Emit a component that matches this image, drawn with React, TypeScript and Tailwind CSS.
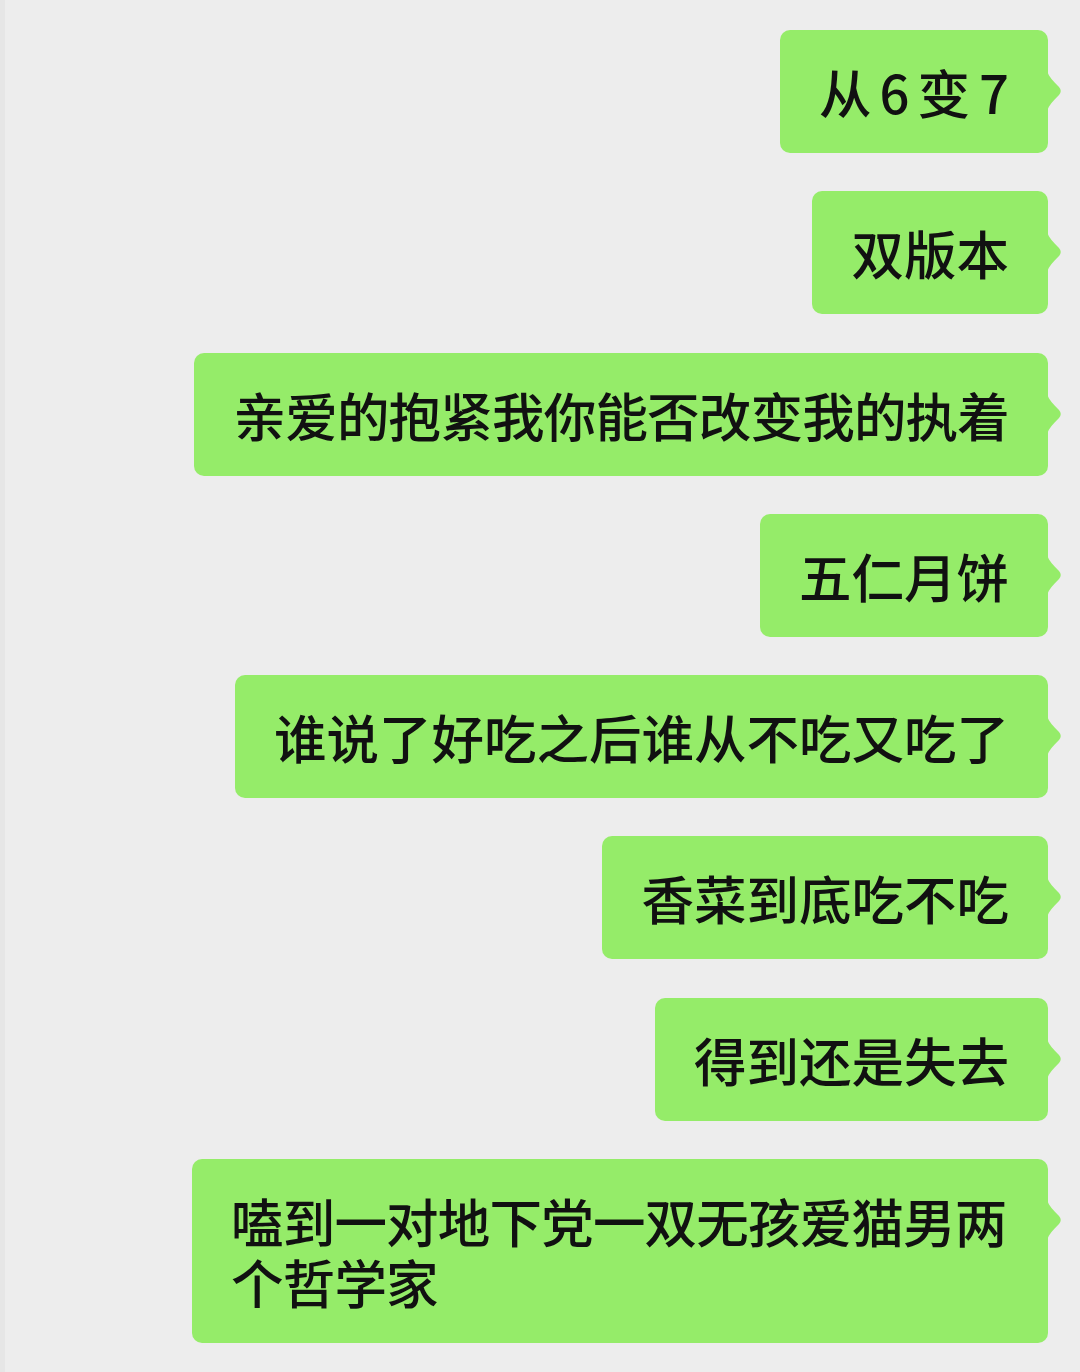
import type { FC, ReactNode } from 'react';

type Msg = { text: ReactNode; tight?: boolean };

const messages: Msg[] = [
  {
    text: (
      <>
        从<span className="mx-[8px]">6</span>变<span className="ml-[9px]">7</span>
      </>
    ),
  },
  { text: '双版本' },
  { text: '亲爱的抱紧我你能否改变我的执着', tight: true },
  { text: '五仁月饼' },
  { text: '谁说了好吃之后谁从不吃又吃了' },
  { text: '香菜到底吃不吃' },
  { text: '得到还是失去' },
  { text: '嗑到一对地下党一双无孩爱猫男两个哲学家', tight: true },
];

const Tail: FC = () => (
  <svg
    width="16"
    height="40"
    viewBox="0 0 16 40"
    className="absolute left-full top-[41px] -ml-px"
  >
    <path
      d="M0 0 C2 6 6 10 12 16 Q15.5 20 12 24 C6 30 2 34 0 40 Z"
      fill="#95ec69"
    />
  </svg>
);

const Bubble: FC<Msg> = ({ text, tight }) => (
  <div
    className={
      'relative max-w-[856px] rounded-[10px] bg-[#95ec69] px-[39px] py-[31px] text-[52.5px] font-medium leading-[61px] text-[#111] ' +
      (tight ? 'tracking-[-0.8px]' : '')
    }
  >
    {text}
    <Tail />
  </div>
);

export default function App() {
  return (
    <div
      className="min-h-[1372px] w-[1080px] border-l-[5px] border-[#e6e6e6] bg-[#ededed]"
      style={{ fontFamily: '"Noto Sans CJK SC", "Noto Sans", sans-serif' }}
    >
      <div className="flex flex-col items-end gap-[38.3px] pr-[32px] pt-[30px]">
        {messages.map((m, i) => (
          <Bubble key={i} {...m} />
        ))}
      </div>
    </div>
  );
}
